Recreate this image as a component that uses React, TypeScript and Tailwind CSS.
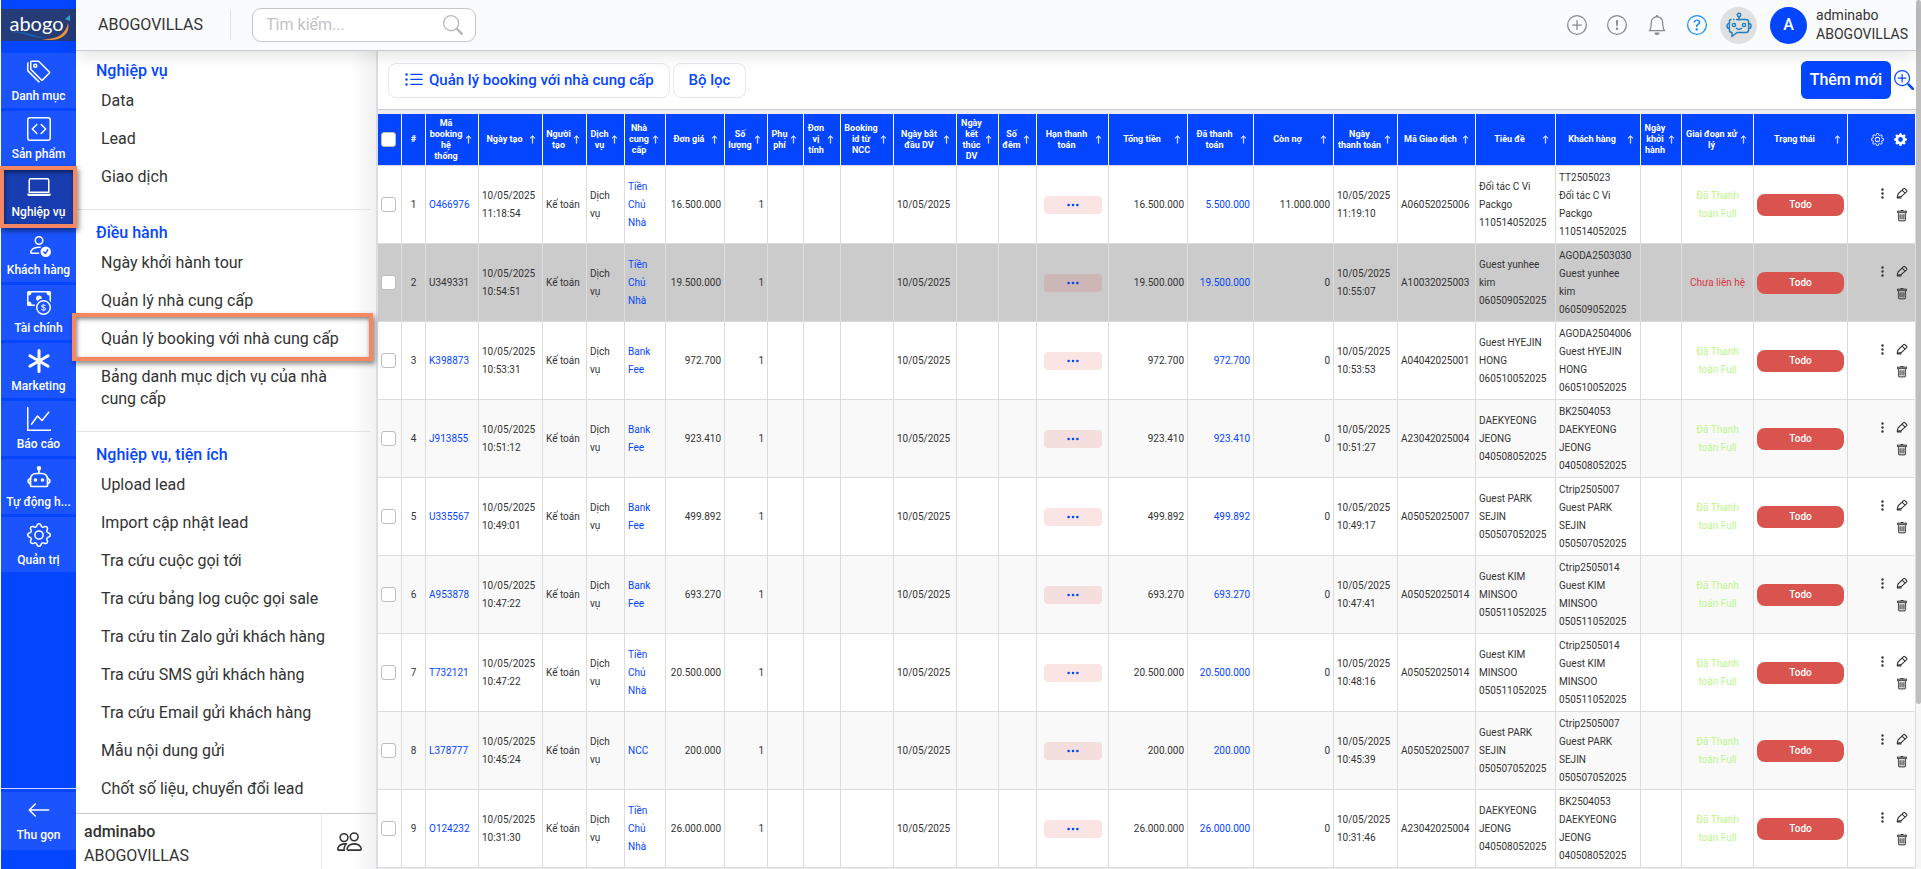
import { useState } from 'react';
import type { IconType } from 'react-icons';
import {
  BsArrowLeft,
  BsArrowUp,
  BsAsterisk,
  BsBell,
  BsCashCoin,
  BsCodeSquare,
  BsExclamationCircle,
  BsGear,
  BsGearFill,
  BsGraphUp,
  BsLaptop,
  BsListUl,
  BsPeople,
  BsPersonCheck,
  BsPlusCircle,
  BsQuestionCircle,
  BsSearch,
  BsTags,
  BsThreeDots,
  BsThreeDotsVertical,
  BsTrash,
  BsZoomIn,
} from 'react-icons/bs';

type Booking = {
  code: string;
  time: string;
  supplier: string;
  total: string;
  paid: string;
  debt: string;
  paidTime: string;
  deal: string;
  title: string;
  customer: string;
  visited?: boolean;
};

const bookings: Booking[] = [
  { code: 'O466976', time: '11:18:54', supplier: 'Tiền\nChủ\nNhà', total: '16.500.000', paid: '5.500.000', debt: '11.000.000', paidTime: '11:19:10', deal: 'A06052025006', title: 'Đối tác C Vi\nPackgo\n110514052025', customer: 'TT2505023\nĐối tác C Vi\nPackgo\n110514052025' },
  { code: 'U349331', time: '10:54:51', supplier: 'Tiền\nChủ\nNhà', total: '19.500.000', paid: '19.500.000', debt: '0', paidTime: '10:55:07', deal: 'A10032025003', title: 'Guest yunhee\nkim\n060509052025', customer: 'AGODA2503030\nGuest yunhee\nkim\n060509052025', visited: true },
  { code: 'K398873', time: '10:53:31', supplier: 'Bank\nFee', total: '972.700', paid: '972.700', debt: '0', paidTime: '10:53:53', deal: 'A04042025001', title: 'Guest HYEJIN\nHONG\n060510052025', customer: 'AGODA2504006\nGuest HYEJIN\nHONG\n060510052025' },
  { code: 'J913855', time: '10:51:12', supplier: 'Bank\nFee', total: '923.410', paid: '923.410', debt: '0', paidTime: '10:51:27', deal: 'A23042025004', title: 'DAEKYEONG\nJEONG\n040508052025', customer: 'BK2504053\nDAEKYEONG\nJEONG\n040508052025' },
  { code: 'U335567', time: '10:49:01', supplier: 'Bank\nFee', total: '499.892', paid: '499.892', debt: '0', paidTime: '10:49:17', deal: 'A05052025007', title: 'Guest PARK\nSEJIN\n050507052025', customer: 'Ctrip2505007\nGuest PARK\nSEJIN\n050507052025' },
  { code: 'A953878', time: '10:47:22', supplier: 'Bank\nFee', total: '693.270', paid: '693.270', debt: '0', paidTime: '10:47:41', deal: 'A05052025014', title: 'Guest KIM\nMINSOO\n050511052025', customer: 'Ctrip2505014\nGuest KIM\nMINSOO\n050511052025' },
  { code: 'T732121', time: '10:47:22', supplier: 'Tiền\nChủ\nNhà', total: '20.500.000', paid: '20.500.000', debt: '0', paidTime: '10:48:16', deal: 'A05052025014', title: 'Guest KIM\nMINSOO\n050511052025', customer: 'Ctrip2505014\nGuest KIM\nMINSOO\n050511052025' },
  { code: 'L378777', time: '10:45:24', supplier: 'NCC', total: '200.000', paid: '200.000', debt: '0', paidTime: '10:45:39', deal: 'A05052025007', title: 'Guest PARK\nSEJIN\n050507052025', customer: 'Ctrip2505007\nGuest PARK\nSEJIN\n050507052025' },
  { code: 'O124232', time: '10:31:30', supplier: 'Tiền\nChủ\nNhà', total: '26.000.000', paid: '26.000.000', debt: '0', paidTime: '10:31:46', deal: 'A23042025004', title: 'DAEKYEONG\nJEONG\n040508052025', customer: 'BK2504053\nDAEKYEONG\nJEONG\n040508052025' },
];

function RobotIcon({ className }: { className?: string }) {
  return (
    <svg className={className} viewBox="0 0 24 24" fill="none" stroke="currentColor" strokeWidth="1.7" strokeLinejoin="round">
      <circle cx="12" cy="3.2" r="1.4" fill="currentColor" />
      <path d="M12 4.500V8.500" />
      <path d="M3.500 20.500V14.500Q3.500 8.500 9.500 8.500H14.500Q20.500 8.500 20.500 14.500V20.500Q20.500 21.500 19.500 21.500H4.500Q3.500 21.500 3.500 20.500Z" />
      <path d="M3.500 13.500Q1.200 14 1.200 16T3.500 18.500M20.500 13.500Q22.800 14 22.800 16T20.500 18.500" />
      <circle cx="8.500" cy="15" r="1.800" fill="currentColor" stroke="none" />
      <circle cx="15.500" cy="15" r="1.800" fill="currentColor" stroke="none" />
    </svg>
  );
}

const navItems: { label: string; icon: IconType | typeof RobotIcon }[] = [
  { label: 'Danh mục', icon: BsTags },
  { label: 'Sản phẩm', icon: BsCodeSquare },
  { label: 'Nghiệp vụ', icon: BsLaptop },
  { label: 'Khách hàng', icon: BsPersonCheck },
  { label: 'Tài chính', icon: BsCashCoin },
  { label: 'Marketing', icon: BsAsterisk },
  { label: 'Báo cáo', icon: BsGraphUp },
  { label: 'Tự động h...', icon: RobotIcon },
  { label: 'Quản trị', icon: BsGear },
];

const menuGroups = [
  { title: 'Nghiệp vụ', items: ['Data', 'Lead', 'Giao dịch'] },
  {
    title: 'Điều hành',
    items: [
      'Ngày khởi hành tour',
      'Quản lý nhà cung cấp',
      'Quản lý booking với nhà cung cấp',
      'Bảng danh mục dịch vụ của nhà cung cấp',
    ],
  },
  {
    title: 'Nghiệp vụ, tiện ích',
    items: [
      'Upload lead',
      'Import cập nhật lead',
      'Tra cứu cuộc gọi tới',
      'Tra cứu bảng log cuộc gọi sale',
      'Tra cứu tin Zalo gửi khách hàng',
      'Tra cứu SMS gửi khách hàng',
      'Tra cứu Email gửi khách hàng',
      'Mẫu nội dung gửi',
      'Chốt số liệu, chuyển đổi lead',
    ],
  },
];

const columns: { label: string; width: string }[] = [
  { label: 'Mã\nbooking\nhệ\nthống', width: 'w-[53px]' },
  { label: 'Ngày tạo', width: 'w-[64px]' },
  { label: 'Người\ntạo', width: 'w-[44px]' },
  { label: 'Dịch\nvụ', width: 'w-[38px]' },
  { label: 'Nhà\ncung\ncấp', width: 'w-[41px]' },
  { label: 'Đơn giá', width: 'w-[59px]' },
  { label: 'Số\nlượng', width: 'w-[43px]' },
  { label: 'Phụ\nphí', width: 'w-[36px]' },
  { label: 'Đơn\nvị\ntính', width: 'w-[37px]' },
  { label: 'Booking\nid từ\nNCC', width: 'w-[53px]' },
  { label: 'Ngày bắt\nđầu DV', width: 'w-[63px]' },
  { label: 'Ngày\nkết\nthúc\nDV', width: 'w-[42px]' },
  { label: 'Số\nđêm', width: 'w-[38px]' },
  { label: 'Hạn thanh\ntoán', width: 'w-[72px]' },
  { label: 'Tổng tiền', width: 'w-[79px]' },
  { label: 'Đã thanh\ntoán', width: 'w-[66px]' },
  { label: 'Còn nợ', width: 'w-[80px]' },
  { label: 'Ngày\nthanh toán', width: 'w-[64px]' },
  { label: 'Mã Giao dịch', width: 'w-[78px]' },
  { label: 'Tiêu đề', width: 'w-[80px]' },
  { label: 'Khách hàng', width: 'w-[85px]' },
  { label: 'Ngày\nkhởi\nhành', width: 'w-[41px]' },
  { label: 'Giai đoạn xử\nlý', width: 'w-[72px]' },
  { label: 'Trạng thái', width: 'w-[94px]' },
];

const cell = 'h-[78px] border-r border-b border-[#dcdcdc] px-[3px] whitespace-pre';
const headCell = 'h-[52px] border-r border-b border-r-white border-b-[#dcdcdc] p-0';
const checkbox =
  'block size-[15px] cursor-pointer appearance-none rounded-[3px] border border-[#bdbdbd] bg-white checked:bg-[#0546ff]';
const marker =
  'pointer-events-none absolute z-20 border-4 border-[#f58762] shadow-[2px_3px_5px_rgba(0,0,0,0.45),inset_1px_2px_4px_rgba(0,0,0,0.5)]';

function Logo() {
  return (
    <a href="#" aria-label="abogo" className="relative mt-[9px] mb-3 flex h-8 items-center justify-center bg-[#253c78]">
      <svg className="absolute inset-0 size-full" viewBox="0 0 75 32" fill="none">
        <path d="M10 23C22 21 32 27 45 29C34 30 24 24 10 23Z" fill="#1c5fae" />
        <path d="M41 30C56 31 65 25 67 14C70 26 58 34 41 30Z" fill="#f0943a" />
        <path d="M64 10L69 6V12Z" fill="#2aa6d6" />
      </svg>
      <span className="relative -mt-1 mr-1 font-['Lato',sans-serif] text-xl leading-6 font-normal text-white">abogo</span>
    </a>
  );
}

function ChatBotIcon() {
  return (
    <svg width="26" height="26" viewBox="0 0 26 26" fill="none" stroke="#1e7fc2" strokeWidth="1.4" strokeLinecap="round" strokeLinejoin="round">
      <circle cx="13" cy="3" r="1.7" />
      <path d="M13 4.800V8" />
      <path d="M10.500 7.500H20Q22.600 7.500 22.600 10V18Q22.600 20.500 20 20.500H11L6 24.500V20.500Q3.400 20.500 3.400 18V10Q3.400 7.500 5 7.500M7.700 7.500H8" />
      <path d="M3.400 11.500Q1 11.500 1 14T3.400 16.500M22.600 11.500Q25 11.500 25 14T22.600 16.500" />
      <circle cx="8" cy="13" r="1.600" />
      <circle cx="18" cy="13" r="1.600" />
      <path d="M10.500 16.200Q13 18.600 15.500 16.200" />
    </svg>
  );
}

function EditIcon() {
  return (
    <svg width="12" height="12" viewBox="0 0 12 12" fill="none" stroke="currentColor" strokeWidth="1.1" strokeLinejoin="round">
      <path d="M1.200 10.400L2 7L7.600 1.600Q8.200 1.200 8.800 1.700L10.700 3.500Q11.200 4.100 10.700 4.600L5.200 9.600Z" />
      <path d="M6 3.200L9.200 6.100M1 10.900H5.500" />
    </svg>
  );
}

function Sidebar() {
  return (
    <nav className="relative ml-px flex w-[75px] shrink-0 flex-col bg-[#0446ff] text-white">
      <Logo />
      <div className="flex flex-col gap-[3px]">
        {navItems.map(({ label, icon: Icon }) => {
          const active = label === 'Nghiệp vụ';
          return (
            <a
              key={label}
              href="#"
              className={`relative flex h-[55px] flex-col items-center gap-[6px] pt-[6px] text-xs leading-[14px] font-medium whitespace-nowrap ${
                active ? 'bg-[#183db0]' : 'bg-[#1b54fd]'
              }`}
            >
              <Icon className="size-6" />
              {label}
              {active && <span className={`${marker} -inset-x-px -top-[3px] -bottom-1`} />}
            </a>
          );
        })}
      </div>
      <div className="mt-auto border-t border-white/80 pt-[3px] pb-[19px]">
        <button className="flex h-[58px] w-full flex-col items-center gap-[6px] bg-[#1b54fd] pt-[6px] text-xs leading-[14px] font-medium">
          <BsArrowLeft className="size-6" />
          Thu gọn
        </button>
      </div>
    </nav>
  );
}

function Header() {
  return (
    <header className="relative z-10 flex h-[51px] shrink-0 items-center border-b border-[#c9cbdb] bg-[#fafbfd] pr-2 pl-[22px] shadow-[0_4px_16px_rgba(0,0,0,0.12)]">
      <span className="text-base">ABOGOVILLAS</span>
      <span className="mr-[21px] ml-[27px] h-[30px] w-px bg-[#dddfe4]" />
      <label className="flex h-[34px] w-56 items-center rounded-[9px] border border-[#c6c6c6] bg-white pr-3 pl-[13px]">
        <input
          type="text"
          aria-label="Tìm kiếm"
          placeholder="Tìm kiếm..."
          className="min-w-0 flex-1 bg-transparent text-base outline-none placeholder:text-[#c3c3c6]"
        />
        <BsSearch className="size-5 text-[#b9b9b9]" />
      </label>
      <div className="ml-auto flex items-center gap-5 text-[#85888e]">
        <button aria-label="Thêm"><BsPlusCircle className="size-5" /></button>
        <button aria-label="Cảnh báo"><BsExclamationCircle className="size-5" /></button>
        <button aria-label="Thông báo"><BsBell className="size-5" /></button>
        <button aria-label="Trợ giúp" className="text-[#1a8cff]"><BsQuestionCircle className="size-5" /></button>
      </div>
      <button aria-label="Chatbot" className="ml-[13px] flex size-[37px] items-center justify-center rounded-full bg-[#e0e0e0]">
        <ChatBotIcon />
      </button>
      <span className="mr-[9px] ml-[13px] flex size-[37px] items-center justify-center rounded-full bg-[#0446ff] text-base font-medium text-white">
        A
      </span>
      <div className="text-sm leading-[19px]">
        <div>adminabo</div>
        <div>ABOGOVILLAS</div>
      </div>
    </header>
  );
}

function MenuPanel() {
  return (
    <aside className="flex w-[302px] shrink-0 flex-col border-r-2 border-[#dcdce2] bg-[linear-gradient(to_left,#f1f1f1,#fff_24px)]">
      <div className="mr-[5px] min-h-0 flex-1">
        {menuGroups.map((group) => (
          <section
            key={group.title}
            className="border-b border-[#e3e3e3] pt-3 pb-[13px] first:pt-[9px] last:border-b-0 last:pb-0"
          >
            <h2 className="pl-5 text-base leading-[22px] font-medium text-[#0546ff]">{group.title}</h2>
            <ul>
              {group.items.map((item) => (
                <li key={item} className="relative py-2 pr-7 pl-[25px] text-base leading-[22px]">
                  <a href="#">{item}</a>
                  {item === 'Quản lý booking với nhà cung cấp' && (
                    <span className={`${marker} -top-[7px] -right-[2px] -bottom-[3px] -left-1`} />
                  )}
                </li>
              ))}
            </ul>
          </section>
        ))}
      </div>
      <div className="flex h-14 shrink-0 border-t border-[#c9c9cc]">
        <div className="flex-1 border-r border-[#e6e6e6] pt-[6px] pl-2 text-base leading-6">
          <div className="font-medium">adminabo</div>
          <div>ABOGOVILLAS</div>
        </div>
        <button aria-label="Người dùng" className="flex w-[54px] items-center justify-center">
          <BsPeople className="size-[25px]" />
        </button>
      </div>
    </aside>
  );
}

function BookingTable() {
  const [selected, setSelected] = useState<string[]>([]);

  const toggle = (code: string) =>
    setSelected((prev) => (prev.includes(code) ? prev.filter((c) => c !== code) : [...prev, code]));

  return (
    <table className="w-full table-fixed border-separate border-spacing-0 text-[10px] leading-[18px]">
      <thead>
        <tr className="bg-[#0446ff] text-[9px] leading-[11px] text-white">
          <th className={`${headCell} w-6`}>
            <input
              type="checkbox"
              aria-label="Chọn tất cả"
              className={`${checkbox} mx-[3px]`}
              checked={selected.length === bookings.length}
              onChange={(e) => setSelected(e.target.checked ? bookings.map((b) => b.code) : [])}
            />
          </th>
          <th className={`${headCell} w-6`}>#</th>
          {columns.map((col) => (
            <th key={col.label} className={`${headCell} ${col.width}`}>
              <div className="flex items-center pr-[5px] pl-[2px]">
                <span className="flex-1 text-center whitespace-pre">{col.label}</span>
                <BsArrowUp className="size-[9px] shrink-0 stroke-current stroke-[0.8]" />
              </div>
            </th>
          ))}
          <th className={`${headCell} w-[68px]`}>
            <div className="flex justify-end gap-[10px] pr-2">
              <BsGear className="size-[13px]" />
              <BsGearFill className="size-[13px]" />
            </div>
          </th>
        </tr>
      </thead>
      <tbody>
        {bookings.map((b, i) => (
          <tr key={b.code} className={b.visited ? 'bg-[#cbcbcb]' : i % 2 ? 'bg-[#f9f9f9]' : 'bg-white'}>
            <td className={cell}>
              <input
                type="checkbox"
                aria-label={`Chọn ${b.code}`}
                className={checkbox}
                checked={selected.includes(b.code)}
                onChange={() => toggle(b.code)}
              />
            </td>
            <td className={`${cell} text-center`}>{i + 1}</td>
            <td className={cell}>
              <a href="#" className={b.visited ? '' : 'text-[#0546ff]'}>{b.code}</a>
            </td>
            <td className={cell}>{`10/05/2025\n${b.time}`}</td>
            <td className={cell}>Kế toán</td>
            <td className={cell}>{'Dịch\nvụ'}</td>
            <td className={cell}>
              <a href="#" className="text-[#0546ff]">{b.supplier}</a>
            </td>
            <td className={`${cell} text-right`}>{b.total}</td>
            <td className={`${cell} text-right`}>1</td>
            <td className={cell} />
            <td className={cell} />
            <td className={cell} />
            <td className={cell}>10/05/2025</td>
            <td className={cell} />
            <td className={cell} />
            <td className={cell}>
              <button
                aria-label="Hạn thanh toán"
                className="mx-auto flex h-[18px] w-[58px] items-center justify-center rounded bg-[#e02424]/12 text-[#0546ff]"
              >
                <BsThreeDots className="size-[14px]" />
              </button>
            </td>
            <td className={`${cell} text-right`}>{b.total}</td>
            <td className={`${cell} text-right`}>
              <a href="#" className="text-[#0546ff]">{b.paid}</a>
            </td>
            <td className={`${cell} text-right`}>{b.debt}</td>
            <td className={cell}>{`10/05/2025\n${b.paidTime}`}</td>
            <td className={cell}>{b.deal}</td>
            <td className={cell}>{b.title}</td>
            <td className={cell}>{b.customer}</td>
            <td className={cell} />
            <td className={`${cell} text-center ${b.visited ? 'text-[#dc3545]' : 'text-[#bdf78b]'}`}>
              {b.visited ? 'Chưa liên hệ' : 'Đã Thanh\ntoán Full'}
            </td>
            <td className={cell}>
              <button className="block h-[22px] w-full rounded-lg bg-[#d9534f] text-center font-medium text-white">
                Todo
              </button>
            </td>
            <td className={cell}>
              <div className="flex justify-end gap-[7px] pr-1">
                <button aria-label="Khác" className="self-start">
                  <BsThreeDotsVertical className="size-[13px]" />
                </button>
                <div className="flex flex-col gap-[11px]">
                  <button aria-label="Sửa"><EditIcon /></button>
                  <button aria-label="Xóa"><BsTrash className="size-3 stroke-current stroke-[0.3]" /></button>
                </div>
              </div>
            </td>
          </tr>
        ))}
      </tbody>
    </table>
  );
}

export default function App() {
  return (
    <div className="flex h-screen overflow-hidden bg-white font-['Roboto',sans-serif] text-[#333]">
      <Sidebar />
      <div className="flex min-w-0 flex-1 flex-col">
        <Header />
        <div className="flex min-h-0 flex-1">
          <MenuPanel />
          <main className="min-w-0 flex-1 overflow-hidden bg-[#ececf0]">
            <div className="mb-1 flex h-[59px] items-center gap-[3px] border-b border-[#c9c9cc] bg-white pr-[2px] pl-[10px] text-[15px] font-medium text-[#0546ff]">
              <button className="flex h-[35px] items-center gap-[5px] rounded-lg border border-[#e6e6ef] bg-white px-[15px]">
                <BsListUl className="size-5" />
                Quản lý booking với nhà cung cấp
              </button>
              <button className="h-[35px] rounded-lg border border-[#e6e6ef] bg-white px-[15px]">Bộ lọc</button>
              <button className="ml-auto h-[38px] rounded-md bg-[#0446ff] px-[9px] text-base text-white">Thêm mới</button>
              <button aria-label="Tìm nâng cao"><BsZoomIn className="size-5" /></button>
            </div>
            <BookingTable />
          </main>
        </div>
      </div>
      <div className="w-[5px] shrink-0 bg-[#f7f7f7]">
        <div className="h-[81%] rounded-full bg-[#bfbfbf]" />
      </div>
    </div>
  );
}
